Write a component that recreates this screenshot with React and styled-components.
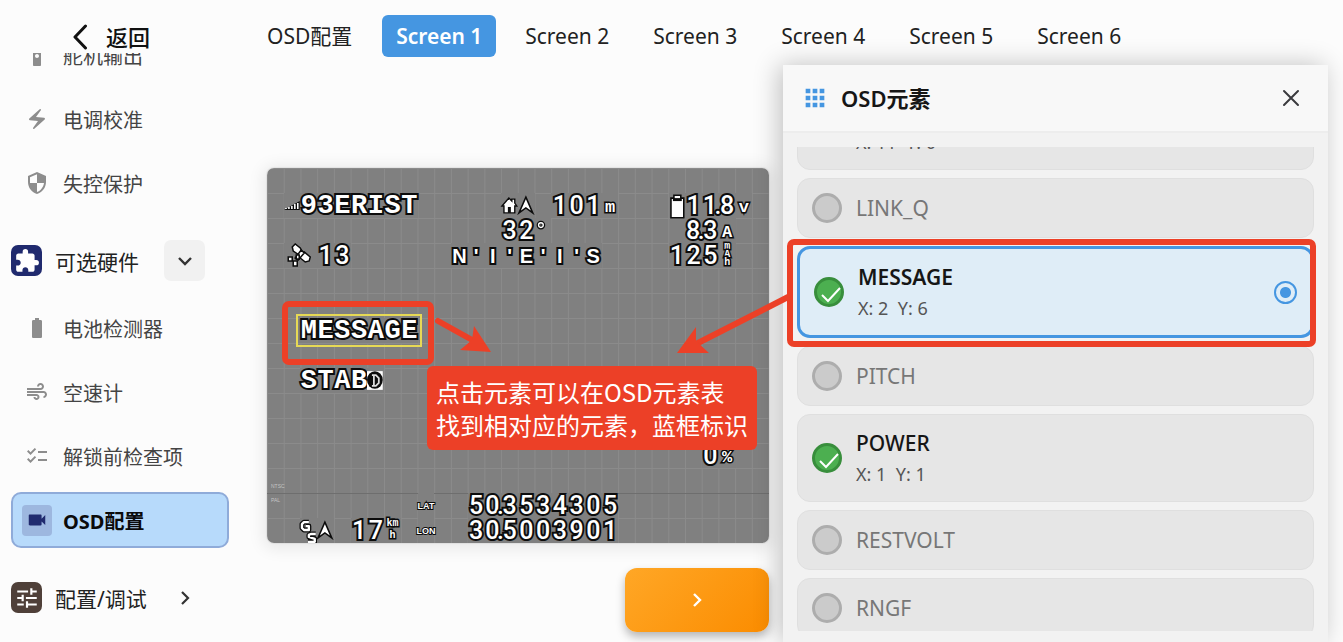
import React from "react";
import styled, { createGlobalStyle, css } from "styled-components";
import {
  MdAir,
  MdApps,
  MdBatteryFull,
  MdChecklist,
  MdElectricBolt,
  MdExtension,
  MdSecurity,
  MdSettingsRemote,
  MdTune,
  MdVideocam,
} from "react-icons/md";

const GlobalStyle = createGlobalStyle`
  *, *::before, *::after { box-sizing: border-box; }
  body {
    margin: 0;
    background: #fcfcfc;
    color: #222;
    font-family: "Noto Sans", "Noto Sans CJK SC", sans-serif;
    overflow: hidden;
  }
  button, input { font: inherit; color: inherit; margin: 0; }
  button { border: 0; padding: 0; background: none; cursor: pointer; }
`;

const Shell = styled.div`
  display: flex;
  height: 100vh;
  overflow: hidden;
`;

/* ---------- sidebar ---------- */

const Sidebar = styled.aside`
  flex: 0 0 240px;
  display: flex;
  flex-direction: column;
  min-height: 0;
`;

const BackButton = styled.button`
  flex: 0 0 53px;
  display: flex;
  align-items: center;
  gap: 18px;
  padding: 21px 0 0 72px;
  font-size: 22px;
  line-height: 32px;
  font-weight: 500;
  color: #111;
`;

const NavScroll = styled.nav`
  flex: 1;
  min-height: 0;
  overflow: hidden;
  padding: 0 11px;
`;

const NavList = styled.div`
  display: flex;
  flex-direction: column;
  gap: 8px;
  margin-top: -26px;
`;

const NavItem = styled.a`
  flex: none;
  display: flex;
  align-items: center;
  gap: 11px;
  height: 56px;
  padding: 0 9px;
  border: 2px solid transparent;
  border-radius: 10px;
  font-size: 20px;
  color: #444;
  text-decoration: none;
  ${(p) =>
    p.$active &&
    css`
      background: #b7dafb;
      border-color: #8fabd9;
      color: #0b0b0b;
      font-weight: 700;
    `}
`;

const NavIcon = styled.span`
  display: grid;
  place-items: center;
  width: 30px;
  height: 31px;
  border-radius: 4px;
  font-size: ${(p) => (p.$active ? 22 : 24)}px;
  color: ${(p) => (p.$active ? "#202a6e" : "#8d8d8d")};
  background: ${(p) => (p.$active ? "#9db7df" : "transparent")};
`;

const NavGroup = styled.div`
  flex: none;
  display: flex;
  align-items: center;
  height: 63px;
  margin-top: 10px;
  font-size: 21px;
`;

const GroupIcon = styled.span`
  display: grid;
  place-items: center;
  width: 31px;
  height: 31px;
  margin-right: 13px;
  border-radius: 7px;
  color: #fff;
  font-size: 26px;
  background: ${(p) => p.$tone};
`;

const GroupName = styled.span`
  flex: 0 0 109px;
`;

const GroupToggle = styled.button`
  display: grid;
  place-items: center;
  width: 41px;
  height: 41px;
  border-radius: 7px;
  background: ${(p) => (p.$open ? "#f1f1f1" : "transparent")};
`;

/* ---------- main area ---------- */

const Main = styled.main`
  flex: 1;
  min-width: 0;
  display: flex;
  flex-direction: column;
  padding: 0 15px 0 27px;
`;

const TopBar = styled.header`
  flex: 0 0 65px;
  display: flex;
  align-items: center;
  gap: 30px;
  padding-top: 7px;
`;

const PageTitle = styled.h1`
  margin: 0;
  font-size: 21px;
  line-height: 28px;
  font-weight: 400;
`;

const Tabs = styled.div`
  display: flex;
  gap: 14px;
`;

const Tab = styled.button`
  width: 114px;
  height: 42px;
  border-radius: 6px;
  font-size: 21px;
  line-height: 42px;
  white-space: nowrap;
  color: ${(p) => (p.$active ? "#fff" : "#222")};
  font-weight: ${(p) => (p.$active ? 600 : 400)};
  background: ${(p) => (p.$active ? "#4596e1" : "transparent")};
`;

const Body = styled.div`
  flex: 1;
  min-height: 0;
  position: relative;
  display: grid;
  grid-template-columns: minmax(0, 502fr) minmax(0, 545fr);
  gap: 14px;
`;

const PreviewColumn = styled.section`
  display: flex;
  flex-direction: column;
  gap: 25px;
  padding-top: 103px;
`;

const NextButton = styled.button`
  align-self: flex-end;
  display: grid;
  place-items: center;
  width: 144px;
  height: 64px;
  border-radius: 12px;
  background: linear-gradient(135deg, #ffa726, #fb8c00);
  box-shadow: 0 5px 10px rgba(0, 0, 0, 0.28);
`;

/* ---------- OSD preview ---------- */

const Osd = styled.div`
  flex: none;
  display: grid;
  grid-template-columns: repeat(30, minmax(0, 1fr));
  grid-template-rows: repeat(15, 25px);
  border-radius: 7px;
  overflow: hidden;
  background-color: #808080;
  background-image: linear-gradient(to right, #8b8b8b 1px, transparent 1px),
    linear-gradient(to bottom, #8b8b8b 1px, transparent 1px);
  background-size: calc(100% / 30) 25px;
`;

const OsdFrame = styled.div`
  flex: none;
  border-radius: 7px;
  box-shadow: 0 2px 16px 4px rgba(0, 0, 0, 0.08), 0 0 1px 1px rgba(0, 0, 0, 0.06);
`;

const Readout = styled.div`
  grid-row: ${(p) => p.$row};
  grid-column: ${(p) => p.$col} / span ${(p) => p.$span};
  display: grid;
  grid-template-columns: subgrid;
  background: #808080;
  color: #fff;
  line-height: 26px;
  text-align: center;
  -webkit-text-stroke: 4px #0c0c0c;
  paint-order: stroke fill;
  ${(p) =>
    ({
      letters: css`
        font-family: "Liberation Mono", monospace;
        font-weight: 700;
        font-size: 27px;
      `,
      digits: css`
        font-family: Roboto, sans-serif;
        font-weight: 500;
        font-size: 25px;
      `,
      compass: css`
        font-family: "Liberation Sans", sans-serif;
        font-weight: 700;
        font-size: 20px;
      `,
      unit: css`
        font-family: "Liberation Mono", monospace;
        font-weight: 700;
        font-size: 17px;
        line-height: 30px;
        -webkit-text-stroke-width: 3px;
      `,
      tag: css`
        font-family: "Liberation Sans", sans-serif;
        font-weight: 700;
        font-size: 9px;
        -webkit-text-stroke-width: 2px;
      `,
    })[p.$kind]}
`;

const Glyph = styled.span`
  display: flex;
  justify-content: center;
  min-width: 0;
`;

const Point = styled.span`
  width: 0;
  display: flex;
  justify-content: center;
`;

const Stack = styled.span`
  display: flex;
  flex-direction: column;
  font-size: 10px;
  line-height: ${(p) => p.$line}px;
`;

const Symbol = styled.svg`
  grid-row: ${(p) => p.$row};
  grid-column: ${(p) => p.$col} / span ${(p) => p.$span || 1};
  width: 100%;
  height: 25px;
  background: #808080;
  overflow: visible;
`;

const SelectedOutline = styled.div`
  grid-row: 7;
  grid-column: 3 / span 7;
  margin: -4px;
  border: 2px solid #e6d955;
`;

const SafeLine = styled.div`
  grid-row: 14;
  grid-column: 1 / -1;
  height: 1px;
  background: #6e6e6e;
`;

const Standard = styled.small`
  grid-row: ${(p) => p.$row};
  grid-column: 1 / span 2;
  align-self: ${(p) => (p.$row === 13 ? "end" : "start")};
  padding: 4px;
  font-family: "Liberation Sans", sans-serif;
  font-size: 5px;
  line-height: 6px;
  color: #c4c4c4;
`;

function Run({ text, span, ...rest }) {
  const cells = [];
  for (const ch of text) {
    if (ch === ".") cells[cells.length - 1].point = true;
    else cells.push({ ch });
  }
  return (
    <Readout $span={cells.length} {...rest}>
      {cells.map((cell, i) =>
        cell.point ? (
          <Glyph key={i}>
            <span>{cell.ch}</span>
            <PointHolder>
              <Point>.</Point>
            </PointHolder>
          </Glyph>
        ) : (
          <Glyph key={i}>{cell.ch}</Glyph>
        )
      )}
    </Readout>
  );
}

const PointHolder = styled.span`
  width: 0;
  padding-left: 1px;
`;

function OsdPreview() {
  return (
    <OsdFrame>
      <Osd>
        <SafeLine />
        <Symbol $row={2} $col={2} viewBox="0 0 17 25">
          <path d="M0 17 L16 8 V17 Z" fill="#0c0c0c" />
          <path d="M2 16V15M5 16V14M8 16V13M11 16V11M14 16V10" stroke="#fff" strokeWidth="1.6" />
        </Symbol>
        <Run $row={2} $col={3} $kind="letters" text="93ERIST" />

        <Symbol $row={2} $col={15} viewBox="0 0 17 25">
          <path
            d="M1 13 L8 5 L11 8 V6 H14 V10 L16 13 H14 V20 H3 V13 Z"
            fill="#fff"
            stroke="#0c0c0c"
            strokeWidth="1.4"
          />
          <rect x="7" y="14" width="3" height="6" fill="#0c0c0c" />
        </Symbol>
        <Symbol $row={2} $col={16} viewBox="0 0 17 25">
          <path d="M8 4 L15 20 L8 15 L1 20 Z" fill="#fff" stroke="#0c0c0c" strokeWidth="1.6" />
        </Symbol>
        <Run $row={2} $col={18} $kind="digits" text="101" />
        <Run $row={2} $col={21} $kind="unit" text="m" />

        <Symbol $row={2} $col={25} viewBox="0 0 17 25">
          <path d="M2 5 H5 V2 H12 V5 H15 V25 H2 Z" fill="#fff" stroke="#0c0c0c" strokeWidth="1.6" />
          <rect x="4" y="5" width="9" height="3" fill="#0c0c0c" />
        </Symbol>
        <Run $row={2} $col={26} $kind="digits" text="11.8" />
        <Run $row={2} $col={29} $kind="unit" text="v" />

        <Run $row={3} $col={15} $kind="digits" text="32" />
        <Symbol $row={3} $col={17} viewBox="0 0 17 25">
          <circle cx="6" cy="7" r="2.6" fill="none" stroke="#0c0c0c" strokeWidth="3.6" />
          <circle cx="6" cy="7" r="2.4" fill="none" stroke="#fff" strokeWidth="1.4" />
        </Symbol>
        <Run $row={3} $col={26} $kind="digits" text="8.3" />
        <Run $row={3} $col={28} $kind="unit" text="A" />

        <Symbol $row={4} $col={2} $span={2} viewBox="0 0 33 25">
          <g stroke="#0c0c0c" strokeWidth="1.5" fill="#fff">
            <path d="M8 4 L11 1 L16 5 L18 9 L15 12 L9 8 Z" />
            <path d="M16 11 L20 9 L26 14 L25 18 L21 19 L16 15 Z" />
            <path d="M11 15 L17 7 L20 10 L14 17 Z" />
            <path d="M4 14h4v4h-4zM9 18h4v5h-4zM12 12h3v4h-3z" />
          </g>
        </Symbol>
        <Run $row={4} $col={4} $kind="digits" text="13" />
        <Run $row={4} $col={12} $kind="compass" text="N'I'E'I'S" />
        <Run $row={4} $col={25} $kind="digits" text="125" />
        <Readout $row={4} $col={28} $span={1} $kind="unit">
          <Stack $line={8}>
            <span>m</span>
            <span>A</span>
            <span>h</span>
          </Stack>
        </Readout>

        <Run $row={7} $col={3} $kind="letters" text="MESSAGE" />
        <SelectedOutline />
        <Run $row={9} $col={3} $kind="letters" text="STAB" />
        <Symbol $row={9} $col={7} viewBox="0 0 17 25">
          <rect x="0" y="3" width="16" height="19" fill="#fff" />
          <ellipse cx="8" cy="12" rx="8" ry="9" fill="#0c0c0c" />
          <path d="M5 7 H9 L12 10 V15 L9 18 H5 M7 7 V18" fill="none" stroke="#ddd" strokeWidth="1.8" />
        </Symbol>

        <Run $row={12} $col={27} $kind="digits" text="0" />
        <Run $row={12} $col={28} $kind="unit" text="%" />

        <Standard $row={13}>NTSC</Standard>
        <Standard $row={14}>PAL</Standard>

        <Readout $row={14} $col={10} $span={1} $kind="tag">
          <Glyph>LAT</Glyph>
        </Readout>
        <Run $row={14} $col={13} $kind="digits" text="50.3534305" />

        <Symbol $row={15} $col={3} viewBox="0 0 17 25">
          <g fill="none" strokeLinejoin="round">
            <path d="M9 4 H4 L2 6 V10 L4 12 H9 V8 H6" stroke="#0c0c0c" strokeWidth="5" />
            <path d="M16 16 H11 L9 17 V19 L15 21 V24 H8" stroke="#0c0c0c" strokeWidth="5" />
            <path d="M9 4 H4 L2 6 V10 L4 12 H9 V8 H6" stroke="#fff" strokeWidth="2.4" />
            <path d="M16 16 H11 L9 17 V19 L15 21 V24 H8" stroke="#fff" strokeWidth="2.4" />
          </g>
        </Symbol>
        <Symbol $row={15} $col={4} viewBox="0 0 17 25">
          <path d="M8 4 L15 20 L8 15 L1 20 Z" fill="#fff" stroke="#0c0c0c" strokeWidth="1.6" />
        </Symbol>
        <Run $row={15} $col={6} $kind="digits" text="17" />
        <Readout $row={15} $col={8} $span={1} $kind="unit">
          <Stack $line={12}>
            <span>km</span>
            <span>h</span>
          </Stack>
        </Readout>
        <Readout $row={15} $col={10} $span={1} $kind="tag">
          <Glyph>LON</Glyph>
        </Readout>
        <Run $row={15} $col={13} $kind="digits" text="30.5003901" />
      </Osd>
    </OsdFrame>
  );
}

/* ---------- element panel ---------- */

const Panel = styled.section`
  position: relative;
  z-index: 1;
  min-height: 0;
  display: flex;
  flex-direction: column;
  background: #f2f2f2;
  box-shadow: -4px 0 24px rgba(0, 0, 0, 0.24);
`;

const PanelHeader = styled.header`
  flex: 0 0 68px;
  display: flex;
  align-items: center;
  padding: 0 22px 0 18px;
  background: #f8f8f8;
  border-bottom: 2px solid #ededed;
`;

const PanelIcon = styled.span`
  display: flex;
  margin-right: 12px;
  font-size: 25px;
  color: #4596e1;
`;

const PanelTitle = styled.h2`
  flex: 1;
  margin: 0;
  font-size: 22px;
  line-height: 32px;
  font-weight: 600;
  color: #161616;
`;

const CloseButton = styled.button`
  display: grid;
  place-items: center;
  width: 30px;
  height: 30px;
`;

const PanelScroll = styled.div`
  flex: 1;
  min-height: 0;
  margin: 14px 14px 11px;
  overflow: hidden;
`;

const ElementList = styled.div`
  display: flex;
  flex-direction: column;
  gap: 8px;
  margin-top: -65px;
`;

const ElementRow = styled.label`
  flex: none;
  display: flex;
  align-items: center;
  gap: 14px;
  padding: 14px;
  border-radius: 13px;
  border: 1px solid #dfdfdf;
  background: #e6e6e6;
  ${(p) =>
    p.$selected &&
    css`
      border: 3px solid #4596e1;
      background: #dfedf7;
    `}
`;

const CheckBox = styled.span`
  display: grid;
  width: 30px;
  height: 30px;
  > * {
    grid-area: 1 / 1;
  }
`;

const CheckInput = styled.input`
  appearance: none;
  width: 30px;
  height: 30px;
  border-radius: 50%;
  border: 3px solid #adadad;
  background: #cbcbcb;
  &:checked {
    border-color: #388e3c;
    background: #4caf50;
  }
`;

const ElementText = styled.span`
  flex: 1;
  display: flex;
  flex-direction: column;
  gap: 4px;
`;

const ElementName = styled.span`
  font-size: 21px;
  line-height: 28px;
  font-weight: ${(p) => p.$weight};
  color: ${(p) => (p.$on ? "#161616" : "#777")};
`;

const ElementPos = styled.span`
  font-size: 18px;
  line-height: 26px;
  white-space: pre;
  color: #555;
`;

const SelectedRadio = styled.input`
  appearance: none;
  width: 23px;
  height: 23px;
  border-radius: 50%;
  border: 2px solid #4596e1;
  background: radial-gradient(circle, #4596e1 5px, transparent 6px);
`;

const elements = [
  { name: "HOME", pos: "X: 11  Y: 0", on: true },
  { name: "LINK_Q" },
  { name: "MESSAGE", pos: "X: 2  Y: 6", on: true, selected: true },
  { name: "PITCH" },
  { name: "POWER", pos: "X: 1  Y: 1", on: true },
  { name: "RESTVOLT" },
  { name: "RNGF" },
];

function Element({ name, pos, on, selected }) {
  return (
    <ElementRow $selected={selected}>
      <CheckBox>
        <CheckInput type="checkbox" defaultChecked={on} />
        {on && (
          <svg width="30" height="30" viewBox="0 0 30 30" aria-hidden="true">
            <path d="M8 18 L14 24 L26 11" fill="none" stroke="#fff" strokeWidth="2" />
          </svg>
        )}
      </CheckBox>
      <ElementText>
        <ElementName $on={on} $weight={selected ? 600 : on ? 500 : 400}>
          {name}
        </ElementName>
        {pos && <ElementPos>{pos}</ElementPos>}
      </ElementText>
      {selected && <SelectedRadio type="radio" name="current" defaultChecked aria-label={name} />}
    </ElementRow>
  );
}

/* ---------- tutorial annotations over the page ---------- */

const Notes = styled.div`
  position: absolute;
  inset: 0;
  z-index: 2;
  pointer-events: none;
`;

const NoteFrame = styled.div`
  position: absolute;
  border: 6px solid #ec4027;
  border-radius: 7px;
`;

const MessageFrame = styled(NoteFrame)`
  left: 15px;
  top: 236px;
  width: 152px;
  height: 64px;
`;

const RowFrame = styled(NoteFrame)`
  right: 12px;
  top: 174px;
  width: 529px;
  height: 108px;
`;

const NoteArrows = styled.svg`
  position: absolute;
  left: 167px;
  top: 223px;
  width: 360px;
  height: 70px;
`;

const Callout = styled.p`
  position: absolute;
  left: 160px;
  top: 301px;
  width: 330px;
  margin: 0;
  padding: 9px;
  border-radius: 6px;
  background: #ec4027;
  color: #fff;
  font-family: "Noto Sans CJK SC", sans-serif;
  font-size: 24px;
  line-height: 33px;
  white-space: nowrap;
`;

function Chevron({ size, d, color, width }) {
  return (
    <svg width={size} height={size} viewBox="0 0 24 24" aria-hidden="true">
      <path d={d} fill="none" stroke={color} strokeWidth={width} />
    </svg>
  );
}

function Item({ icon: Icon, children, active }) {
  return (
    <NavItem href="#" $active={active}>
      <NavIcon $active={active}>
        <Icon />
      </NavIcon>
      {children}
    </NavItem>
  );
}

export default function App() {
  return (
    <>
      <GlobalStyle />
      <Shell>
        <Sidebar>
          <BackButton>
            <svg width="16" height="26" viewBox="0 0 16 26" aria-hidden="true">
              <path d="M13.5 2 L3 13 L13.5 24" fill="none" stroke="#111" strokeWidth="3" strokeLinecap="round" strokeLinejoin="round" />
            </svg>
            返回
          </BackButton>
          <NavScroll>
            <NavList>
              <Item icon={MdSettingsRemote}>舵机输出</Item>
              <Item icon={MdElectricBolt}>电调校准</Item>
              <Item icon={MdSecurity}>失控保护</Item>
              <NavGroup>
                <GroupIcon $tone="#202a6e">
                  <MdExtension />
                </GroupIcon>
                <GroupName>可选硬件</GroupName>
                <GroupToggle $open aria-label="可选硬件">
                  <Chevron size={24} d="M6 9 L12 15 L18 9" color="#333" width={2.4} />
                </GroupToggle>
              </NavGroup>
              <Item icon={MdBatteryFull}>电池检测器</Item>
              <Item icon={MdAir}>空速计</Item>
              <Item icon={MdChecklist}>解锁前检查项</Item>
              <Item icon={MdVideocam} active>
                OSD配置
              </Item>
              <NavGroup>
                <GroupIcon $tone="#4f4039">
                  <MdTune />
                </GroupIcon>
                <GroupName>配置/调试</GroupName>
                <GroupToggle aria-label="配置/调试">
                  <Chevron size={24} d="M9 6 L15 12 L9 18" color="#333" width={2.2} />
                </GroupToggle>
              </NavGroup>
            </NavList>
          </NavScroll>
        </Sidebar>

        <Main>
          <TopBar>
            <PageTitle>OSD配置</PageTitle>
            <Tabs role="tablist">
              {[1, 2, 3, 4, 5, 6].map((n) => (
                <Tab key={n} role="tab" aria-selected={n === 1} $active={n === 1}>
                  Screen {n}
                </Tab>
              ))}
            </Tabs>
          </TopBar>

          <Body>
            <PreviewColumn>
              <OsdPreview />
              <NextButton aria-label="Next">
                <Chevron size={24} d="M9 6 L15 12 L9 18" color="#fff" width={2.4} />
              </NextButton>
            </PreviewColumn>

            <Panel>
              <PanelHeader>
                <PanelIcon>
                  <MdApps size={28} />
                </PanelIcon>
                <PanelTitle>OSD元素</PanelTitle>
                <CloseButton aria-label="Close">
                  <svg width="18" height="18" viewBox="0 0 18 18" aria-hidden="true">
                    <path d="M2 2 L16 16 M16 2 L2 16" stroke="#3a3a3e" strokeWidth="2" strokeLinecap="round" />
                  </svg>
                </CloseButton>
              </PanelHeader>
              <PanelScroll>
                <ElementList>
                  {elements.map((el) => (
                    <Element key={el.name} {...el} />
                  ))}
                </ElementList>
              </PanelScroll>
            </Panel>

            <Notes>
              <MessageFrame />
              <RowFrame />
              <NoteArrows viewBox="0 0 360 70" aria-hidden="true">
                <g fill="#ec4027" stroke="#ec4027">
                  <path d="M4 33 L40 53" strokeWidth="6" strokeLinecap="round" />
                  <path d="M57 64 L40 38 L38 52 L26 62 Z" stroke="none" />
                  <path d="M356 8 L262 56" strokeWidth="6" />
                  <path d="M243 65 L262 39 L262 53 L275 65 Z" stroke="none" />
                </g>
              </NoteArrows>
              <Callout>
                点击元素可以在OSD元素表
                <br />
                找到相对应的元素，蓝框标识
              </Callout>
            </Notes>
          </Body>
        </Main>
      </Shell>
    </>
  );
}
